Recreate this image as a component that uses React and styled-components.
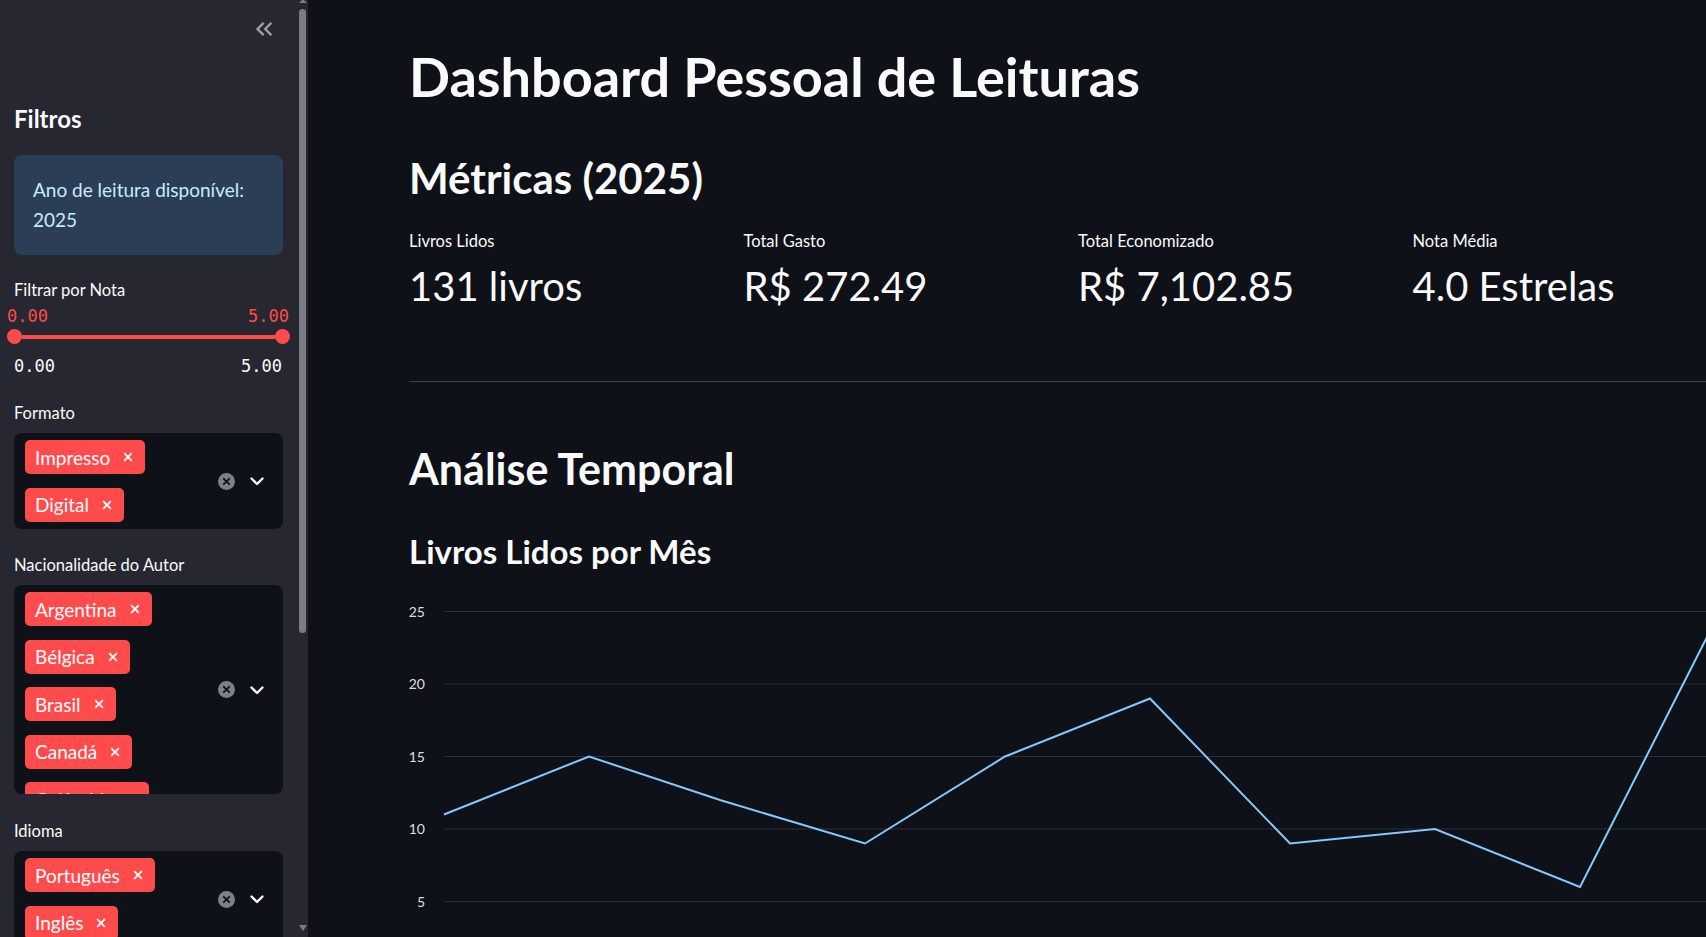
import React from "react";
import styled, { createGlobalStyle } from "styled-components";

const GlobalStyle = createGlobalStyle`
  html, body { margin: 0; padding: 0; height: 100%; background: #0e1117; overflow: hidden; }
  body { font-family: Lato, "Noto Sans", sans-serif; color: #fafafa; }
  #root { height: 100%; }
  *, *::before, *::after { box-sizing: border-box; }
`;

const Page = styled.div`
  display: flex;
  width: 100vw;
  height: 100vh;
  overflow: hidden;
  background: #0e1117;
`;

const Sidebar = styled.aside`
  width: 308px;
  flex-shrink: 0;
  height: 100%;
  display: flex;
  background: #262730;
`;

const SidebarScroll = styled.div`
  flex: 1;
  min-width: 0;
  height: 100%;
  overflow: hidden;
`;

const ScrollBar = styled.div`
  width: 12px;
  flex-shrink: 0;
  height: 100%;
  display: flex;
  flex-direction: column;
  align-items: flex-start;
  padding-left: 2px;
`;

const ArrowSlot = styled.div`
  height: ${(p) => p.$h}px;
  width: 9px;
  display: flex;
  justify-content: center;
  align-items: ${(p) => (p.$down ? "flex-start" : "flex-end")};
  flex-shrink: 0;
`;

const Triangle = styled.div`
  width: 0;
  height: 0;
  border-left: 4.5px solid transparent;
  border-right: 4.5px solid transparent;
  ${(p) =>
    p.$down
      ? "border-top: 6px solid #7b7c83;"
      : "border-bottom: 4px solid #7b7c83; margin-bottom: 6px;"}
`;

const ScrollThumb = styled.div`
  margin-left: 0.5px;
  width: 7px;
  height: 624px;
  border-radius: 4px;
  background: #7b7c83;
  flex-shrink: 0;
`;

const ScrollRest = styled.div`
  flex: 1;
`;

const SidebarInner = styled.div`
  display: flex;
  flex-direction: column;
  padding: 15px 13px 60px 14px;
`;

const HeaderRow = styled.div`
  display: flex;
  justify-content: flex-end;
  align-items: flex-start;
  padding-right: 5px;
  height: 27px;
`;

const CollapseIcon = styled.svg`
  width: 28px;
  height: 28px;
  flex-shrink: 0;
  fill: #9da0a8;
`;

const SideTitle = styled.h2`
  margin: 63px 0 0;
  font-size: 24px;
  font-weight: 700;
  line-height: 1.2;
  color: #fafafa;
`;

const InfoBox = styled.div`
  margin-top: 21px;
  padding: 20px 18px 20px 19px;
  border-radius: 8px;
  background: #2b3e56;
  color: #c7ebff;
  font-size: 19px;
  line-height: 30px;
`;

const FieldLabel = styled.div`
  margin-top: ${(p) => p.$mt}px;
  font-size: 16.5px;
  line-height: 18px;
  color: #fafafa;
`;

const MonoRow = styled.div`
  display: flex;
  justify-content: space-between;
  margin: ${(p) => p.$mt}px ${(p) => (p.$outer ? "-6px" : "1px")} 0 ${(p) => (p.$outer ? "-7px" : "0")};
  font-family: "DejaVu Sans Mono", "Liberation Mono", monospace;
  font-size: 17px;
  line-height: 20px;
  color: ${(p) => (p.$red ? "#ff4b4b" : "#fafafa")};
`;

const TrackRow = styled.div`
  display: flex;
  align-items: center;
  margin: 3px -7px 0 -7px;
  height: 15px;
`;

const Thumb = styled.div`
  width: 15px;
  height: 15px;
  border-radius: 50%;
  background: #ff4b4b;
  flex-shrink: 0;
`;

const TrackLine = styled.div`
  flex: 1;
  height: 4px;
  background: #ff4b4b;
`;

const SelectBox = styled.div`
  margin-top: 11px;
  display: flex;
  align-items: center;
  background: #0e1117;
  border-radius: 8px;
  overflow: hidden;
  height: ${(p) => p.$h}px;
`;

const TagColumn = styled.div`
  flex: 1;
  align-self: flex-start;
  display: flex;
  flex-direction: column;
  align-items: flex-start;
  gap: 13.5px;
  padding: 7px 0 7px 11px;
`;

const Tag = styled.span`
  display: inline-flex;
  align-items: center;
  gap: 13px;
  height: 34px;
  padding: 0 12px 0 10px;
  border-radius: 5px;
  background: #ff4b4b;
  color: #ffffff;
  font-size: 19px;
  white-space: nowrap;
  flex-shrink: 0;
`;

const TagX = styled.svg`
  width: 10px;
  height: 10px;
  stroke: #ffffff;
  stroke-width: 1.8;
  flex-shrink: 0;
`;

const SelectIcons = styled.div`
  display: flex;
  align-items: center;
  gap: 12px;
  padding-right: 16px;
  flex-shrink: 0;
`;

const ClearIcon = styled.svg`
  width: 17px;
  height: 17px;
`;

const ChevronIcon = styled.svg`
  width: 20px;
  height: 20px;
  fill: none;
  stroke: #ffffff;
  stroke-width: 2.3;
  stroke-linecap: round;
  stroke-linejoin: round;
`;

const Main = styled.main`
  flex: 1;
  min-width: 0;
  height: 100%;
  overflow: hidden;
`;

const Content = styled.div`
  width: 1318px;
  margin-left: 101px;
  padding-top: 45px;
  display: flex;
  flex-direction: column;
`;

const Title = styled.h1`
  margin: 0;
  font-size: 54px;
  font-weight: 700;
  line-height: 1.2;
  color: #fafafa;
`;

const H2 = styled.h2`
  margin: ${(p) => p.$mt}px 0 0;
  font-size: ${(p) => p.$size}px;
  font-weight: 700;
  line-height: 1.2;
  color: #fafafa;
`;

const H3 = styled.h3`
  margin: 37px 0 0;
  font-size: 33px;
  font-weight: 700;
  line-height: 1.2;
  color: #fafafa;
`;

const MetricsGrid = styled.div`
  margin-top: 29px;
  display: grid;
  grid-template-columns: repeat(4, 1fr);
  gap: 20px;
`;

const Metric = styled.div`
  display: flex;
  flex-direction: column;
`;

const MetricLabel = styled.div`
  font-size: 16.5px;
  line-height: 19px;
  color: #fafafa;
`;

const MetricValue = styled.div`
  margin-top: 11px;
  font-size: 40px;
  line-height: 1.2;
  color: #fafafa;
`;

const Divider = styled.hr`
  margin: 71px 0 0;
  border: none;
  height: 1px;
  background: #3d3f44;
`;

const ChartSvg = styled.svg`
  margin-top: 10px;
  display: block;
  width: 1318px;
  height: 400px;
  flex-shrink: 0;
`;

function CloseX() {
  return (
    <TagX viewBox="0 0 10 10">
      <line x1="1.2" y1="1.2" x2="8.8" y2="8.8" />
      <line x1="8.8" y1="1.2" x2="1.2" y2="8.8" />
    </TagX>
  );
}

function MultiSelect({ tags, height }) {
  return (
    <SelectBox $h={height}>
      <TagColumn>
        {tags.map((t) => (
          <Tag key={t}>
            {t}
            <CloseX />
          </Tag>
        ))}
      </TagColumn>
      <SelectIcons>
        <ClearIcon viewBox="0 0 17 17">
          <circle cx="8.5" cy="8.5" r="8.5" fill="#7d808a" />
          <line x1="5.8" y1="5.8" x2="11.2" y2="11.2" stroke="#0e1117" strokeWidth="1.8" strokeLinecap="round" />
          <line x1="11.2" y1="5.8" x2="5.8" y2="11.2" stroke="#0e1117" strokeWidth="1.8" strokeLinecap="round" />
        </ClearIcon>
        <ChevronIcon viewBox="0 0 20 20">
          <path d="M4.5 7.5 L10 13 L15.5 7.5" />
        </ChevronIcon>
      </SelectIcons>
    </SelectBox>
  );
}

const metrics = [
  { label: "Livros Lidos", value: "131 livros" },
  { label: "Total Gasto", value: "R$ 272.49" },
  { label: "Total Economizado", value: "R$ 7,102.85" },
  { label: "Nota Média", value: "4.0 Estrelas" },
];

const points = [
  [35, 11], [180, 15], [311, 12], [456, 9], [596, 15],
  [741, 19], [881, 9], [1026, 10], [1171, 6], [1311, 25],
];
const yOf = (v) => 393 - 14.5 * v;

function Chart() {
  const ticks = [5, 10, 15, 20, 25];
  const d = points.map(([x, v], i) => `${i ? "L" : "M"}${x} ${yOf(v)}`).join(" ");
  return (
    <ChartSvg viewBox="0 0 1318 400">
      {ticks.map((t) => (
        <g key={t}>
          <line x1="35" x2="1318" y1={yOf(t)} y2={yOf(t)} stroke="#2b2e36" strokeWidth="1.2" />
          <text
            x="16"
            y={yOf(t) + 5}
            textAnchor="end"
            fontSize="14"
            fill="#dcdde1"
            fontFamily="Lato, 'Noto Sans', sans-serif"
          >
            {t}
          </text>
        </g>
      ))}
      <path d={d} fill="none" stroke="#83c9ff" strokeWidth="2" strokeLinejoin="miter" />
    </ChartSvg>
  );
}

export default function App() {
  return (
    <>
      <GlobalStyle />
      <Page>
        <Sidebar>
          <SidebarScroll>
            <SidebarInner>
              <HeaderRow>
                <CollapseIcon viewBox="0 0 24 24">
                  <path d="M17.59 18L19 16.59 14.42 12 19 7.41 17.59 6l-6 6z" />
                  <path d="M11 18l1.41-1.41L7.83 12l4.58-4.59L11 6l-6 6z" />
                </CollapseIcon>
              </HeaderRow>
              <SideTitle>Filtros</SideTitle>
              <InfoBox>
                Ano de leitura disponível:
                <br />
                2025
              </InfoBox>
              <FieldLabel $mt={26}>Filtrar por Nota</FieldLabel>
              <MonoRow $red $outer $mt={7.5}>
                <span>0.00</span>
                <span>5.00</span>
              </MonoRow>
              <TrackRow>
                <Thumb />
                <TrackLine />
                <Thumb />
              </TrackRow>
              <MonoRow $mt={11.5}>
                <span>0.00</span>
                <span>5.00</span>
              </MonoRow>
              <FieldLabel $mt={28.5}>Formato</FieldLabel>
              <MultiSelect tags={["Impresso", "Digital"]} height={96} />
              <FieldLabel $mt={27}>Nacionalidade do Autor</FieldLabel>
              <MultiSelect tags={["Argentina", "Bélgica", "Brasil", "Canadá", "Colômbia"]} height={209} />
              <FieldLabel $mt={28}>Idioma</FieldLabel>
              <MultiSelect tags={["Português", "Inglês"]} height={96} />
            </SidebarInner>
          </SidebarScroll>
          <ScrollBar>
            <ArrowSlot $h={9}>
              <Triangle />
            </ArrowSlot>
            <ScrollThumb />
            <ScrollRest />
            <ArrowSlot $h={12} $down>
              <Triangle $down />
            </ArrowSlot>
          </ScrollBar>
        </Sidebar>
        <Main>
          <Content>
            <Title>Dashboard Pessoal de Leituras</Title>
            <H2 $mt={43} $size={42}>Métricas (2025)</H2>
            <MetricsGrid>
              {metrics.map((m) => (
                <Metric key={m.label}>
                  <MetricLabel>{m.label}</MetricLabel>
                  <MetricValue>{m.value}</MetricValue>
                </Metric>
              ))}
            </MetricsGrid>
            <Divider />
            <H2 $mt={61} $size={43}>Análise Temporal</H2>
            <H3>Livros Lidos por Mês</H3>
            <Chart />
          </Content>
        </Main>
      </Page>
    </>
  );
}
